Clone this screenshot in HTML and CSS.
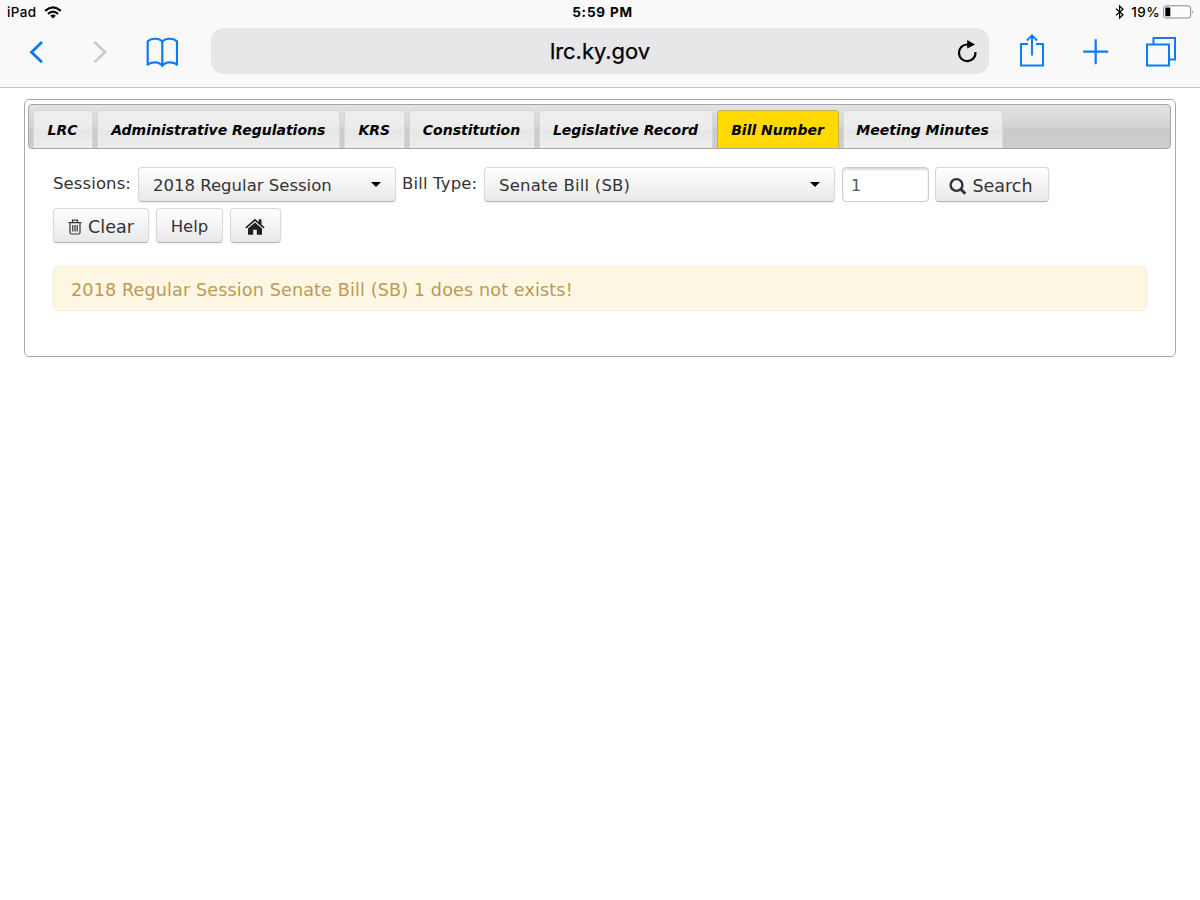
FILE: index.html
```html
<!DOCTYPE html>
<html lang="en">
<head>
<meta charset="utf-8">
<title>lrc.ky.gov</title>
<link rel="stylesheet" href="styles.css">
</head>
<body>
<header class="browser">
  <div class="status">
    <div class="status-left"><span class="device">iPad</span>
      <svg class="wifi" width="18" height="13" viewBox="0 0 18 13" fill="none" stroke="#000" stroke-width="2.2"><path d="M1.2 4.8Q9-2 16.8 4.8M4 7.8Q9 3.4 14 7.8"/><path d="M6.2 9.7Q9 7.3 11.8 9.7L9 12.5Z" fill="#000" stroke="none"/></svg>
    </div>
    <span class="clock">5:59 PM</span>
    <div class="status-right">
      <svg width="10" height="14" viewBox="0 0 10 14" fill="none" stroke="#000" stroke-width="1.2"><path d="M1 3.8L8 9.8 4.6 13V1L8 4.2 1 10.2"/></svg>
      <span class="percent">19%</span>
      <svg class="battery" width="31" height="14" viewBox="0 0 31 14"><rect x=".6" y=".8" width="27" height="12.2" rx="2.4" fill="#fcfcfc" stroke="#888"/><rect x="2.3" y="2.6" width="5" height="8.6" rx=".6" fill="#000"/><path d="M29 5.2q1.6 1.7 0 3.6z" fill="#777"/></svg>
    </div>
  </div>
  <nav class="toolbar">
    <svg class="back" width="16" height="24" viewBox="0 0 16 24" fill="none" stroke="#0a78f0" stroke-width="2.8"><path d="M14 2L3.5 12.2 14 22.2"/></svg>
    <svg class="forward" width="16" height="24" viewBox="0 0 16 24" fill="none" stroke="#c9c9ca" stroke-width="2.5"><path d="M2.5 2L13 12.2 2.5 22.2"/></svg>
    <svg class="book" width="34" height="32" viewBox="0 0 34 32" fill="none" stroke="#0a7af5" stroke-width="2.2" stroke-linejoin="round"><path d="M17.300 4.800C14.800 1 6.500.6 2.700 4.500V27.700C6.500 24.300 14.800 24.500 17.300 28.900C19.800 24.500 28.500 24.300 32 27.700V4.500C28.500.6 19.800 1 17.300 4.800V28.900"/></svg>
    <div class="address"><span class="url">lrc.ky.gov</span>
      <svg class="reload" width="22" height="26" viewBox="0 0 22 26"><path d="M19.500 14A8.300 8.300 0 1 1 11.200 6.500H12.500" fill="none" stroke="#000" stroke-width="2.200"/><path d="M11.200 2.100L19 6.400 11.200 10.400Z"/></svg>
    </div>
    <svg class="share" width="28" height="36" viewBox="0 0 28 36" fill="none" stroke="#0a7cfa" stroke-width="2"><path d="M10 11H3V32.500H25V11H18M14 22.500V2.500M9 7.500L14 2.500 19 7.500"/></svg>
    <svg class="plus" width="28" height="28" viewBox="0 0 28 28" fill="none" stroke="#0a7cfa" stroke-width="2.200"><path d="M1.200 13.700H26.200M13.700 1.200V26.200"/></svg>
    <svg class="pages" width="32" height="32" viewBox="0 0 32 32" fill="none" stroke="#0a7cfa" stroke-width="2"><path d="M2 8.500H24V29.500H2ZM8.500 8.500V2H30V23.500H24"/></svg>
  </nav>
</header>
<main class="panel">
  <ul class="tabs">
    <li class="tab t1"><span>LRC</span></li>
    <li class="tab t2"><span>Administrative Regulations</span></li>
    <li class="tab t3"><span>KRS</span></li>
    <li class="tab t4"><span>Constitution</span></li>
    <li class="tab t5"><span>Legislative Record</span></li>
    <li class="tab t6 active"><span>Bill Number</span></li>
    <li class="tab t7"><span>Meeting Minutes</span></li>
  </ul>
  <section class="form">
    <div class="row">
      <span class="label sessions">Sessions:</span>
      <div class="button select session-select"><span>2018 Regular Session</span><i class="caret"></i></div>
      <span class="label type">Bill Type:</span>
      <div class="button select type-select"><span>Senate Bill (SB)</span><i class="caret"></i></div>
      <div class="number">1</div>
      <div class="button search"><svg width="18" height="18" viewBox="0 0 18 18" fill="none" stroke="#333" stroke-width="2.400"><circle cx="7.500" cy="8" r="5.900"/><path d="M11.800 12.300L16.300 16.800" stroke-width="3"/></svg><span>Search</span></div>
    </div>
    <div class="row second">
      <div class="button clear"><svg width="14" height="16" viewBox="0 0 14 16" fill="none" stroke="#333" stroke-width="1.200"><path d="M.5 3.600H13.500M4.500 3.400V1.200H9.500V3.400M2 3.800V13.500Q2 15 3.500 15H10.500Q12 15 12 13.500V3.800M4.800 6V12.500M7 6V12.500M9.200 6V12.500"/></svg><span>Clear</span></div>
      <div class="button help"><span>Help</span></div>
      <div class="button home"><svg width="20" height="18" viewBox="0 0 20 18"><path d="M.3 9.200L10 .8 13.700 4V1.300H16.500V6.400L19.700 9.200 18.600 10.500 10 3.100 1.400 10.500Z" fill="#222"/><path d="M3 10.500L10 4.500 17 10.500V16.800H11.800V11.800H8.200V16.800H3Z" fill="#222"/></svg></div>
    </div>
    <div class="alert"><span>2018 Regular Session Senate Bill (SB) 1 does not exists!</span></div>
  </section>
</main>
</body>
</html>
```
FILE: styles.css
```css
* { box-sizing: border-box; }
body { margin: 0; background: #fff; font-family: "DejaVu Sans", sans-serif; color: #333; }
svg { display: block; flex: none; }
span { white-space: nowrap; }

.browser { height: 88px; background: #f9f9f9; border-bottom: 1px solid #c6c6c7; font-family: Inter, sans-serif; color: #000; }
.status { height: 24px; display: grid; grid-template-columns: 1fr auto 1fr; align-items: center; padding: 0 6px 0 7px; font-size: 13.5px; }
.status-left, .status-right { display: flex; align-items: center; }
.status-right { justify-content: flex-end; }
.device { font-weight: 500; font-size: 13.5px; letter-spacing: .4px; }
.wifi { margin-left: 7px; }
.clock { font-weight: 700; letter-spacing: .8px; padding-left: 4px; }
.percent { font-weight: 500; letter-spacing: .4px; margin: 0 3px 0 6px; }
.toolbar { height: 63px; display: flex; align-items: flex-start; padding-left: 28px; }
.back { margin-top: 16px; }
.forward { margin: 16px 0 0 48px; }
.book { margin: 13px 0 0 37px; }
.address { margin: 4px 0 0 32px; width: 778px; height: 46px; border-radius: 13px; background: #e7e7e9; display: flex; align-items: center; justify-content: flex-end; padding-right: 11px; }
.url { flex: 1; text-align: center; font-size: 22px; padding-left: 33px; letter-spacing: -.05px; -webkit-text-stroke: .25px #000; }
.share { margin: 9px 0 0 29px; }
.plus { margin: 14px 0 0 36px; }
.pages { margin: 12px 0 0 35px; }

.panel { margin: 11px 24px 0 23.5px; height: 258px; border: 1px solid #aaa; border-radius: 5px; padding: 4px 4px 0 3.5px; }
.tabs { list-style: none; margin: 0; height: 45px; padding: 5px 3.5px 0; display: flex; gap: 4px; border: 1px solid #a6a6a6; border-radius: 4px; background: linear-gradient(#e2e2e2 0%, #d6d6d6 48%, #cacaca 56%, #cdcdcd 100%); }
.tab { height: 38px; display: flex; align-items: center; justify-content: center; border: 1px solid #d8d8d8; border-bottom: 0; border-radius: 4px 4px 0 0; background: linear-gradient(#efefef 0%, #ebebeb 48%, #e6e6e6 56%, #eee 100%); color: #000; font-size: 14px; font-weight: 700; font-style: italic; padding-top: 1px; }
.t1 { width: 60px; }
.t2 { width: 243.5px; }
.t3 { width: 60.5px; }
.t4 { width: 126px; }
.t5 { width: 174px; }
.t6 { width: 122px; }
.t7 { width: 160px; }
.active { background: #ffd900; border-color: #c5b05a; }

.form { padding: 18px 24.5px 0 25px; }
.row { display: flex; height: 35px; }
.second { margin-top: 6px; }
.label { line-height: 34px; font-size: 16.5px; }
.sessions { width: 85px; letter-spacing: .1px; }
.type { width: 82px; margin-left: 6px; letter-spacing: .15px; }
.button { height: 35px; display: flex; align-items: center; justify-content: center; border: 1px solid #d8d8d8; border-bottom-color: #b3b3b3; border-radius: 4px; background: linear-gradient(#fff, #e8e8e8); box-shadow: 0 1px 2px rgba(0,0,0,.06); font-size: 16.5px; padding-top: 2px; }
.select { justify-content: space-between; padding-left: 14px; padding-right: 14px; }
.session-select { width: 258px; }
.type-select { width: 351px; letter-spacing: .2px; }
.caret { border: 5px solid transparent; border-top-color: #000; border-bottom: 0; margin-top: -3px; }
.number { width: 87px; height: 35px; margin-left: 7px; border: 1px solid #ccc; border-radius: 4px; box-shadow: inset 0 2px 2px rgba(0,0,0,.14); padding: 1px 0 0 8px; line-height: 33px; color: #555; font-size: 16px; }
.search { width: 114px; margin-left: 6px; gap: 5px; font-size: 17.5px; padding-right: 2px; }
.clear { width: 96px; gap: 6px; font-size: 17.5px; }
.help { width: 67px; margin-left: 7px; }
.home { width: 51px; margin-left: 6.5px; }
.alert { height: 45px; margin-top: 23px; border: 1px solid #fbeed5; border-radius: 4px; background: #fdf7e3; color: #c09853; padding-left: 17px; line-height: 46px; font-size: 17.6px; letter-spacing: .12px; }
```
